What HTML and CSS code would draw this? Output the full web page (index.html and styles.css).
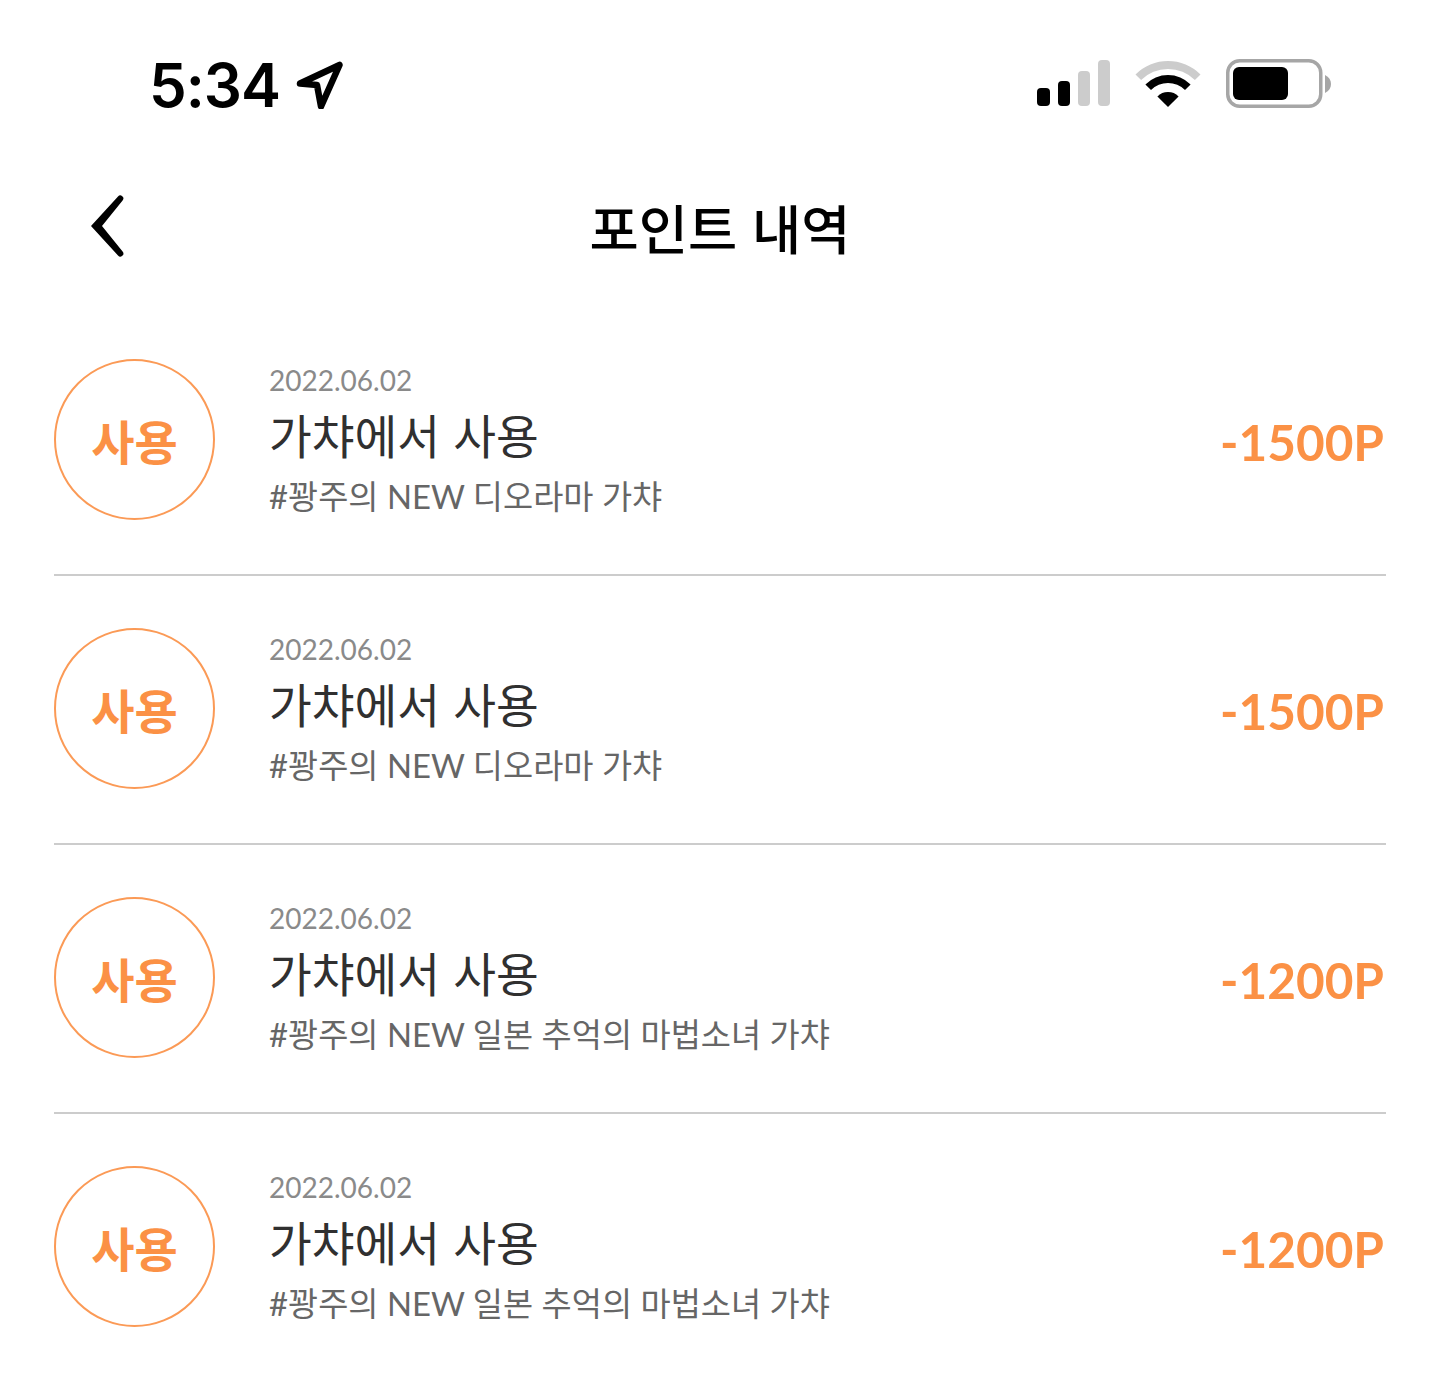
FILE: index.html
```html
<!DOCTYPE html>
<html lang="ko">
<head>
    <meta charset="UTF-8">
    <meta name="viewport" content="width=device-width, initial-scale=1.0">
    <title>포인트 내역</title>
    <link rel="stylesheet" href="styles.css">
</head>
<body>
    <!-- Status bar -->
    <div class="status-bar">
        <div class="status-left">
            <span class="status-time">5:34</span>
            <svg class="icon-location" width="48" height="48" viewBox="0 0 48 48">
                <path d="M4 22.5 L43.5 4 L25 45.5 L21 24 Z" fill="none" stroke="#000" stroke-width="6.5" stroke-linejoin="round"/>
            </svg>
        </div>
        <div class="status-right">
            <svg class="icon-signal" width="74" height="50" viewBox="0 0 74 50">
                <rect x="0" y="28" width="13" height="18" rx="4" fill="#000"/>
                <rect x="21" y="21" width="12" height="25" rx="4" fill="#000"/>
                <rect x="41" y="11" width="12" height="35" rx="4" fill="#ccc"/>
                <rect x="61" y="0" width="12" height="46" rx="4" fill="#ccc"/>
            </svg>
            <svg class="icon-wifi" width="66" height="52" viewBox="0 0 66 52">
                <path d="M0.5 15.5 A46 46 0 0 1 65.5 15.5 L59.9 21.1 A38 38 0 0 0 6.1 21.1 Z" fill="#ccc"/>
                <path d="M10.4 25.4 A32 32 0 0 1 55.6 25.4 L50 31 A24 24 0 0 0 16 31 Z" fill="#000"/>
                <path d="M22.4 37.4 A15 15 0 0 1 43.6 37.4 L33 48 Z" fill="#000"/>
            </svg>
            <svg class="icon-battery" width="106" height="52" viewBox="0 0 106 52">
                <rect x="2.75" y="1.75" width="93" height="45.5" rx="12" fill="none" stroke="#a6a6a6" stroke-width="3.5"/>
                <rect x="8" y="8" width="55" height="33" rx="6" fill="#000"/>
                <path d="M100 16 C104 18 106 21 106 25 C106 29 104 32 100 34 Z" fill="#a6a6a6"/>
            </svg>
        </div>
    </div>

    <!-- Header -->
    <div class="page-header">
        <svg class="back-icon" width="40" height="66" viewBox="0 0 40 66">
            <path d="M30 3.5 a3 3 0 0 1 4.6 3.9 L14 33 L34.6 58.6 a3 3 0 0 1 -4.6 3.9 L3 33 Z" fill="#000"/>
        </svg>
        <h1 class="page-title">포인트 내역</h1>
    </div>

    <!-- Point history -->
    <div class="point-list">
        <div class="point-row">
            <div class="point-badge">사용</div>
            <div class="point-info">
                <div class="point-date">2022.06.02</div>
                <div class="point-title">가챠에서 사용</div>
                <div class="point-desc">#꽝주의 NEW 디오라마 가챠</div>
            </div>
            <div class="point-amount">-1500P</div>
        </div>
        <div class="point-row">
            <div class="point-badge">사용</div>
            <div class="point-info">
                <div class="point-date">2022.06.02</div>
                <div class="point-title">가챠에서 사용</div>
                <div class="point-desc">#꽝주의 NEW 디오라마 가챠</div>
            </div>
            <div class="point-amount">-1500P</div>
        </div>
        <div class="point-row">
            <div class="point-badge">사용</div>
            <div class="point-info">
                <div class="point-date">2022.06.02</div>
                <div class="point-title">가챠에서 사용</div>
                <div class="point-desc">#꽝주의 NEW 일본 추억의 마법소녀 가챠</div>
            </div>
            <div class="point-amount">-1200P</div>
        </div>
        <div class="point-row">
            <div class="point-badge">사용</div>
            <div class="point-info">
                <div class="point-date">2022.06.02</div>
                <div class="point-title">가챠에서 사용</div>
                <div class="point-desc">#꽝주의 NEW 일본 추억의 마법소녀 가챠</div>
            </div>
            <div class="point-amount">-1200P</div>
        </div>
    </div>
</body>
</html>
```

FILE: styles.css
```css
body {
    margin: 0;
    height: 1380px;
    overflow: hidden;
    background-color: white;
    font-family: Lato, "Noto Sans CJK KR", sans-serif;
}

/* Status bar */
.status-bar {
    display: flex;
    justify-content: space-between;
    align-items: center;
    height: 170px;
    padding: 0 109px 0 149px;
}

.status-left {
    display: flex;
    align-items: center;
    gap: 16px;
}

.status-time {
    font-family: Inter, sans-serif;
    font-size: 60px;
    font-weight: 600;
    line-height: 60px;
    letter-spacing: -1px;
    color: black;
}

.status-right {
    display: flex;
    align-items: center;
    gap: 24px;
}

/* Header */
.page-header {
    position: relative;
    display: flex;
    justify-content: center;
    align-items: center;
    box-sizing: border-box;
    height: 116px;
    padding-bottom: 3px;
}

.back-icon {
    position: absolute;
    left: 88px;
    top: 23px;
}

.page-title {
    margin: 0;
    font-family: "Noto Sans CJK KR", sans-serif;
    font-size: 53.5px;
    font-weight: 500;
    color: black;
}

/* List */
.point-list {
    margin: 21px 54px 0;
}

.point-row {
    display: flex;
    align-items: center;
    height: 265px;
    padding-bottom: 2px;
    border-bottom: 2px solid #cccccc;
}

.point-row:last-child {
    border-bottom: none;
}

.point-badge {
    display: flex;
    justify-content: center;
    align-items: center;
    box-sizing: border-box;
    width: 161px;
    height: 161px;
    border: 2px solid #fb9a56;
    border-radius: 50%;
    font-family: "Noto Sans CJK KR", sans-serif;
    font-size: 47px;
    font-weight: 700;
    color: #fb9145;
}

.point-info {
    flex: 1;
    margin-top: 4px;
    margin-left: 54px;
}

.point-date {
    margin-bottom: 2px;
    font-size: 28px;
    line-height: 34px;
    color: #8a8a8a;
}

.point-title {
    font-family: "Noto Sans CJK KR", sans-serif;
    font-size: 46.5px;
    line-height: 70px;
    color: #303030;
}

.point-desc {
    margin-top: 4px;
    font-size: 32.8px;
    line-height: 48px;
    color: #666666;
}

.point-amount {
    margin-top: 4px;
    margin-right: 2px;
    font-size: 49.5px;
    font-weight: 700;
    color: #fb9145;
}
```
